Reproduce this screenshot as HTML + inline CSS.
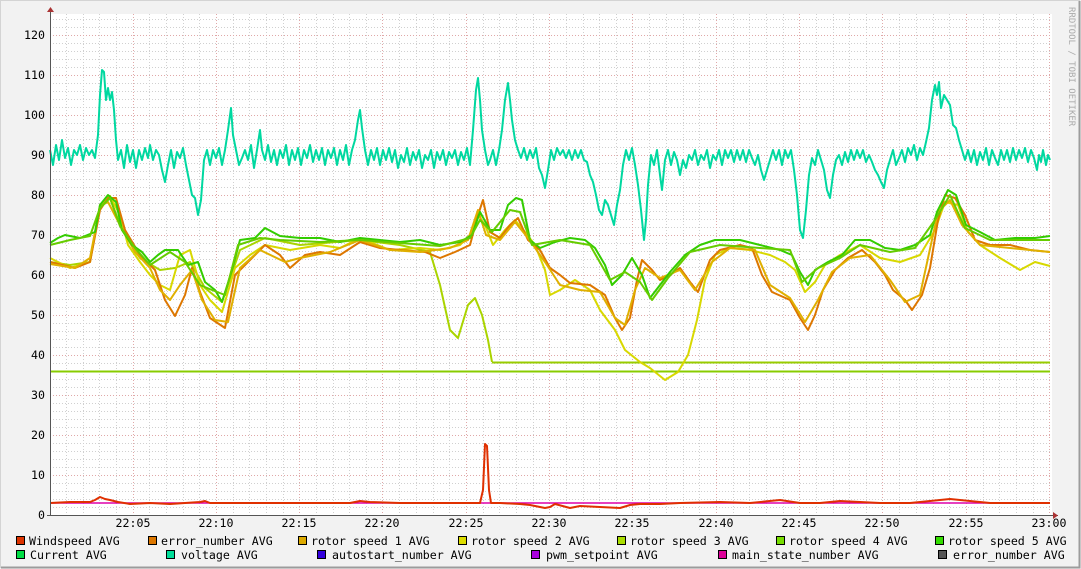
<!DOCTYPE html>
<html><head><meta charset="utf-8"><style>
html,body{margin:0;padding:0;background:#f2f2f2;}
svg{display:block}
text{font-family:"DejaVu Sans Mono","Liberation Mono",monospace;font-size:11.6px;fill:#000}
</style></head><body>
<svg width="1081" height="569" viewBox="0 0 1081 569" xmlns="http://www.w3.org/2000/svg">
<rect x="0" y="0" width="1081" height="569" fill="#f2f2f2"/>
<path d="M0.5 568 V0.5 H1080" stroke="#d4d4d4" fill="none"/>
<path d="M1 567.5 H1079.5 V1" stroke="#9c9c9c" stroke-width="2" fill="none"/>
<rect x="50" y="14" width="1002" height="501" fill="#fff"/>
<g stroke="#d0d0d0" stroke-dasharray="1,2" stroke-width="1">
<path d="M50 507.5H1052M50 499.5H1052M50 491.5H1052M50 483.5H1052M50 467.5H1052M50 459.5H1052M50 451.5H1052M50 443.5H1052M50 427.5H1052M50 419.5H1052M50 411.5H1052M50 403.5H1052M50 387.5H1052M50 379.5H1052M50 371.5H1052M50 363.5H1052M50 347.5H1052M50 339.5H1052M50 331.5H1052M50 323.5H1052M50 307.5H1052M50 299.5H1052M50 291.5H1052M50 283.5H1052M50 267.5H1052M50 259.5H1052M50 251.5H1052M50 243.5H1052M50 227.5H1052M50 219.5H1052M50 211.5H1052M50 203.5H1052M50 187.5H1052M50 179.5H1052M50 171.5H1052M50 163.5H1052M50 147.5H1052M50 139.5H1052M50 131.5H1052M50 123.5H1052M50 107.5H1052M50 99.5H1052M50 91.5H1052M50 83.5H1052M50 67.5H1052M50 59.5H1052M50 51.5H1052M50 43.5H1052M50 27.5H1052M50 19.5H1052"/>
<path d="M66.5 14V515M83.5 14V515M99.5 14V515M116.5 14V515M149.5 14V515M166.5 14V515M183.5 14V515M199.5 14V515M233.5 14V515M249.5 14V515M266.5 14V515M283.5 14V515M316.5 14V515M333.5 14V515M349.5 14V515M366.5 14V515M399.5 14V515M416.5 14V515M433.5 14V515M449.5 14V515M483.5 14V515M499.5 14V515M516.5 14V515M533.5 14V515M566.5 14V515M583.5 14V515M599.5 14V515M616.5 14V515M649.5 14V515M666.5 14V515M683.5 14V515M699.5 14V515M733.5 14V515M749.5 14V515M766.5 14V515M783.5 14V515M816.5 14V515M833.5 14V515M849.5 14V515M866.5 14V515M899.5 14V515M916.5 14V515M933.5 14V515M949.5 14V515M983.5 14V515M999.5 14V515M1016.5 14V515M1033.5 14V515"/>
</g>
<g stroke="#e0a8a8" stroke-dasharray="1,2" stroke-width="1">
<path d="M50 475.5H1052M50 435.5H1052M50 395.5H1052M50 355.5H1052M50 315.5H1052M50 275.5H1052M50 235.5H1052M50 195.5H1052M50 155.5H1052M50 115.5H1052M50 75.5H1052M50 35.5H1052"/>
<path d="M133.5 14V515M216.5 14V515M299.5 14V515M382.5 14V515M466.5 14V515M549.5 14V515M632.5 14V515M716.5 14V515M799.5 14V515M882.5 14V515M966.5 14V515M1049.5 14V515"/>
</g>
<g fill="none" stroke-width="2" stroke-linejoin="round">
<path d="M50 371.5H1050" stroke="#88cc00"/>
<path d="M492 362.5H1050" stroke="#99cc00"/>
<polyline stroke="#aad400" points="50,262 70,265 90,262 100,205 110,198 122,230 140,258 160,270 175,268 190,262 205,288 222,302 240,250 265,238 300,245 360,240 400,245 430,252 440,285 450,330 458,338 468,305 475,298 482,315 488,340 492,362"/>
<polyline stroke="#d8d800" points="50,258 70,268 90,262 100,208 110,196 120,215 128,245 140,262 150,275 160,285 170,290 180,255 190,250 200,285 210,300 222,312 235,268 250,255 265,245 290,250 320,245 340,248 360,238 390,250 420,248 440,250 460,245 470,235 478,215 485,225 493,245 505,230 515,220 525,232 535,245 545,270 550,295 560,290 575,280 590,290 600,310 615,330 625,350 640,362 650,368 665,380 678,372 688,355 697,320 705,280 715,255 730,248 750,250 770,255 785,262 795,270 805,292 815,282 825,265 840,255 860,245 880,258 900,262 920,255 935,230 945,202 958,205 968,232 980,245 1000,258 1020,270 1035,262 1050,266"/>
<polyline stroke="#dd7700" points="50,262 75,268 90,262 100,210 108,198 116,198 125,230 140,255 155,270 165,300 175,316 185,295 192,268 200,292 210,318 225,328 235,275 248,262 265,245 280,255 290,268 305,255 320,252 340,255 360,242 380,248 400,250 425,252 440,258 455,252 470,245 478,215 483,200 490,232 500,238 510,225 518,218 528,240 540,250 550,268 560,275 570,283 590,285 605,295 615,318 622,330 630,318 637,280 642,260 652,270 660,280 670,275 680,268 690,282 698,292 710,260 720,250 740,245 752,248 762,275 772,292 790,300 800,318 808,330 815,315 823,290 835,270 848,258 862,250 875,262 885,275 893,290 905,300 912,310 922,295 930,268 938,220 945,195 955,198 965,215 975,240 990,245 1010,245 1030,250 1050,252"/>
<polyline stroke="#e0b000" points="50,264 75,268 90,258 100,206 108,202 120,225 135,252 150,268 160,290 170,300 180,285 192,270 202,300 215,320 228,322 240,268 260,250 285,262 300,258 330,252 360,240 390,250 420,252 450,248 468,240 478,210 486,235 500,240 515,222 528,238 545,262 560,285 580,290 600,292 615,318 625,325 635,290 645,268 660,278 680,270 695,290 712,262 730,248 755,250 770,285 790,298 805,322 818,300 832,272 850,258 870,255 890,280 905,302 920,295 938,212 950,200 962,225 980,245 1010,248 1050,252"/>
<polyline stroke="#33cc00" points="50,243 58,238 65,235 80,238 95,232 100,205 108,195 116,202 122,230 132,245 142,252 150,262 158,255 165,250 178,250 188,265 198,262 205,282 215,290 222,302 232,270 240,240 255,238 265,228 280,236 300,238 320,238 340,242 360,238 380,240 400,242 420,240 440,245 460,242 472,235 480,212 490,230 500,230 508,205 516,198 522,200 530,240 540,248 555,242 570,238 585,240 595,248 605,265 612,285 622,275 632,258 642,275 650,298 660,285 670,272 685,255 700,245 715,240 740,240 760,245 780,250 792,255 800,272 808,285 815,270 828,262 842,255 855,240 870,240 885,248 900,250 915,245 930,235 937,212 948,190 956,195 966,225 980,232 995,240 1015,238 1035,238 1050,236"/>
<polyline stroke="#66cc00" points="50,245 70,240 90,236 100,208 110,198 120,226 135,248 150,265 170,252 185,262 200,285 212,290 225,295 238,245 260,238 280,240 320,242 360,240 400,243 440,246 470,238 480,220 492,232 510,210 520,212 532,245 560,240 590,245 610,280 625,272 640,282 652,300 668,278 690,252 720,245 760,248 790,250 802,282 818,268 840,258 860,245 890,252 915,248 935,220 950,195 965,228 990,240 1050,240"/>
<polyline stroke="#00d8a0" points="50,150 53,165 56,145 59,160 62,140 65,158 68,148 71,165 74,150 77,155 80,145 83,160 86,148 89,155 92,150 95,158 98,135 100,95 102,70 104,72 106,100 108,88 110,100 112,92 114,110 116,140 118,160 121,150 124,168 127,145 130,162 133,150 136,168 139,150 142,160 145,148 148,158 150,145 153,160 156,150 159,155 162,170 165,182 168,165 171,150 174,168 177,152 180,158 183,148 186,165 189,180 192,195 195,198 198,215 201,200 204,160 207,150 210,165 213,150 216,158 219,148 222,165 225,150 228,130 231,108 233,135 236,150 239,165 242,158 245,150 248,160 251,145 254,168 257,150 260,130 262,150 265,160 268,145 271,162 274,150 277,165 280,150 283,158 286,145 289,165 292,150 295,160 298,148 301,165 304,150 307,158 310,145 313,162 316,150 319,160 322,148 325,165 328,150 331,158 334,148 337,165 340,150 343,160 346,145 349,165 352,150 355,140 358,120 360,110 362,128 365,150 368,165 371,150 374,160 377,148 380,165 383,150 386,160 389,148 392,162 395,150 398,168 401,155 404,162 407,148 410,165 413,152 416,160 419,150 422,168 425,155 428,160 431,150 434,168 437,152 440,160 443,150 446,165 449,152 452,158 455,150 458,165 461,152 464,160 467,148 470,165 473,130 476,90 478,78 480,100 482,130 485,150 488,165 490,160 493,150 496,165 499,150 502,130 505,100 508,83 510,100 512,120 515,140 518,150 521,158 524,148 527,160 530,150 533,158 536,148 539,168 542,175 545,188 548,170 551,150 554,160 557,148 560,155 563,150 566,158 569,150 572,160 575,150 578,158 581,150 584,160 587,162 590,175 593,182 596,195 599,210 602,215 605,200 608,205 611,215 614,225 617,205 620,190 623,165 626,150 629,160 632,148 635,165 638,185 641,210 644,240 646,220 648,185 651,155 654,165 657,150 660,175 662,190 665,160 668,150 671,165 674,152 677,160 680,175 683,160 686,168 689,155 692,160 695,150 698,165 701,155 704,160 707,150 710,168 713,155 716,160 719,150 722,165 725,150 728,158 731,150 734,162 737,150 740,160 743,150 746,162 749,150 752,158 755,165 758,155 761,170 764,180 767,170 770,160 773,150 776,160 779,150 782,165 785,150 788,158 791,150 794,170 797,195 800,230 803,238 806,210 809,175 812,158 815,165 818,150 821,160 824,170 827,190 830,198 833,175 836,160 839,155 842,165 845,152 848,162 851,150 854,160 857,150 860,158 863,150 866,162 869,155 872,162 875,170 878,175 881,182 884,188 887,170 890,160 893,150 896,165 899,158 902,150 905,162 908,148 911,155 914,145 917,160 920,148 923,155 926,142 929,128 932,100 935,85 937,95 939,82 941,108 944,95 947,100 950,105 953,125 956,128 959,140 962,150 965,160 968,150 971,162 974,150 977,165 980,152 983,160 986,148 989,165 992,150 995,158 998,165 1001,150 1004,160 1007,150 1010,162 1013,148 1016,160 1019,150 1022,158 1025,148 1028,162 1031,150 1034,158 1037,170 1039,155 1041,162 1043,150 1046,165 1048,155 1050,160"/>
<path d="M50 503H1050" stroke="#dd00aa" stroke-width="1.6"/>
<polyline stroke="#e03000" points="50,503 70,502 90,502 95,500 100,497 105,499 110,500 118,502 130,504 150,503 170,504 200,502 205,501 210,503 230,503 260,503 300,503 330,503 350,503 360,501 370,502 400,503 440,503 470,503 480,503 483,490 485,444 487,446 489,490 491,503 500,503 520,504 530,505 545,508 550,507 555,504 570,508 580,506 600,507 620,508 630,505 640,504 660,504 680,503 720,502 750,503 780,500 800,503 820,503 840,501 860,502 880,503 910,503 930,501 950,499 970,501 990,503 1020,503 1050,503"/>
</g>
<path d="M50.5 515V9" stroke="#555" stroke-width="1"/>
<path d="M47 515.5H1058" stroke="#555" stroke-width="1"/>
<path d="M47 12L50.5 7L54 12Z" fill="#a33"/>
<path d="M1053 512L1058 515.5L1053 519Z" fill="#a33"/>
<g text-anchor="end">
<text x="45" y="519">0</text><text x="45" y="479">10</text><text x="45" y="439">20</text><text x="45" y="399">30</text><text x="45" y="359">40</text><text x="45" y="319">50</text><text x="45" y="279">60</text><text x="45" y="239">70</text><text x="45" y="199">80</text><text x="45" y="159">90</text><text x="45" y="119">100</text><text x="45" y="79">110</text><text x="45" y="39">120</text>
</g>
<g text-anchor="middle">
<text x="133" y="527">22:05</text><text x="216" y="527">22:10</text><text x="299" y="527">22:15</text><text x="382" y="527">22:20</text><text x="466" y="527">22:25</text><text x="549" y="527">22:30</text><text x="632" y="527">22:35</text><text x="716" y="527">22:40</text><text x="799" y="527">22:45</text><text x="882" y="527">22:50</text><text x="966" y="527">22:55</text><text x="1049" y="527">23:00</text>
</g>
<text x="1069" y="7" transform="rotate(90 1069 7)" style="font-size:9px;fill:#aaa">RRDTOOL / TOBI OETIKER</text>
<g stroke="#000" stroke-width="1">
<rect x="16.5" y="536.5" width="8" height="8" fill="#dd3300"/>
<rect x="148.5" y="536.5" width="8" height="8" fill="#dd7700"/>
<rect x="298.5" y="536.5" width="8" height="8" fill="#ddaa00"/>
<rect x="458.5" y="536.5" width="8" height="8" fill="#dddd00"/>
<rect x="617.5" y="536.5" width="8" height="8" fill="#aadd00"/>
<rect x="776.5" y="536.5" width="8" height="8" fill="#77dd00"/>
<rect x="935.5" y="536.5" width="8" height="8" fill="#33dd00"/>
<rect x="16.5" y="550.5" width="8" height="8" fill="#00dd44"/>
<rect x="166.5" y="550.5" width="8" height="8" fill="#00dd99"/>
<rect x="317.5" y="550.5" width="8" height="8" fill="#3300dd"/>
<rect x="531.5" y="550.5" width="8" height="8" fill="#aa00dd"/>
<rect x="718.5" y="550.5" width="8" height="8" fill="#dd0099"/>
<rect x="938.5" y="550.5" width="8" height="8" fill="#555"/>
</g>
<text x="29" y="545">Windspeed AVG</text>
<text x="161" y="545">error_number AVG</text>
<text x="311" y="545">rotor speed 1 AVG</text>
<text x="471" y="545">rotor speed 2 AVG</text>
<text x="630" y="545">rotor speed 3 AVG</text>
<text x="789" y="545">rotor speed 4 AVG</text>
<text x="948" y="545">rotor speed 5 AVG</text>
<text x="30" y="559">Current AVG</text>
<text x="181" y="559">voltage AVG</text>
<text x="332" y="559">autostart_number AVG</text>
<text x="546" y="559">pwm_setpoint AVG</text>
<text x="732" y="559">main_state_number AVG</text>
<text x="953" y="559">error_number AVG</text>
</svg>
</body></html>
